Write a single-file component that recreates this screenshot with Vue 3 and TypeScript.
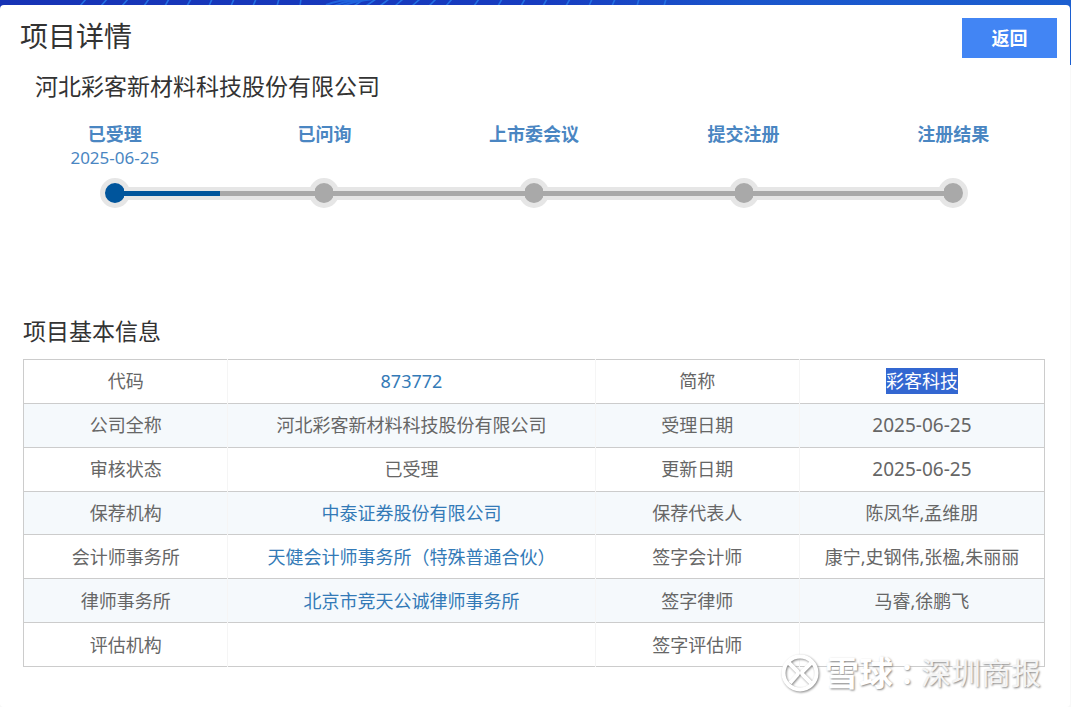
<script setup lang="ts">
interface Stage {
  name: string
  date?: string
}

interface Field {
  text: string
  kind?: 'link' | 'code' | 'date' | 'marked'
}

interface Row {
  leftLabel: string
  left: Field
  rightLabel: string
  right: Field
}

const company = '河北彩客新材料科技股份有限公司'

const stages: Stage[] = [
  { name: '已受理', date: '2025-06-25' },
  { name: '已问询' },
  { name: '上市委会议' },
  { name: '提交注册' },
  { name: '注册结果' },
]

const rows: Row[] = [
  { leftLabel: '代码', left: { text: '873772', kind: 'code' }, rightLabel: '简称', right: { text: '彩客科技', kind: 'marked' } },
  { leftLabel: '公司全称', left: { text: company }, rightLabel: '受理日期', right: { text: '2025-06-25', kind: 'date' } },
  { leftLabel: '审核状态', left: { text: '已受理' }, rightLabel: '更新日期', right: { text: '2025-06-25', kind: 'date' } },
  { leftLabel: '保荐机构', left: { text: '中泰证券股份有限公司', kind: 'link' }, rightLabel: '保荐代表人', right: { text: '陈凤华,孟维朋' } },
  { leftLabel: '会计师事务所', left: { text: '天健会计师事务所（特殊普通合伙）', kind: 'link' }, rightLabel: '签字会计师', right: { text: '康宁,史钢伟,张楹,朱丽丽' } },
  { leftLabel: '律师事务所', left: { text: '北京市竞天公诚律师事务所', kind: 'link' }, rightLabel: '签字律师', right: { text: '马睿,徐鹏飞' } },
  { leftLabel: '评估机构', left: { text: '' }, rightLabel: '签字评估师', right: { text: '' } },
]
</script>

<template>
  <div class="page">
    <svg class="banner" viewBox="0 0 1071 65" preserveAspectRatio="none" aria-hidden="true">
      <defs>
        <linearGradient id="banner-fill">
          <stop offset="0" stop-color="#1733b5" />
          <stop offset="0.5" stop-color="#173cc0" />
          <stop offset="0.7" stop-color="#1a55cb" />
          <stop offset="1" stop-color="#1c5fd0" />
        </linearGradient>
      </defs>
      <rect width="1071" height="65" fill="url(#banner-fill)" />
      <path
        d="M80 6l6-7M101 6l6-7M122 6l6-7M144 6l5-7M165 6l4-7M187 6l4-7M209 6l3-7M231 6l3-7M253 6l3-7M277 6l2-7M300 6l1-7M354 6l10-7M366 6l10-7M380 6l9-7M395 6l8-7M412 6l8-7M429 6l7-7M446 6l6-7M474 6l5-7M498 6l4-7M521 6l4-7M543 6l4-7M566 6l4-7M589 6l3-7M612 6l3-7M637 6l2-7M664 6l2-7"
        stroke="#2470e2"
        stroke-width="1.6"
        fill="none"
      />
      <path d="M326 5q12-5 30-6M334 6q14-6 32-7M342 6q12-5 32-7" stroke="#1f62dc" stroke-width="2" fill="none" />
    </svg>

    <main class="card">
      <header class="head">
        <h1>项目详情</h1>
        <button type="button" class="back">返回</button>
      </header>
      <h2 class="company">{{ company }}</h2>

      <ol class="stages">
        <li v-for="(stage, i) in stages" :key="stage.name" :class="{ done: i === 0 }">
          <strong>{{ stage.name }}</strong>
          <time>{{ stage.date }}</time>
          <div class="track">
            <span class="segment" :class="{ blank: i === 0 }"></span>
            <span class="dot"></span>
            <span class="segment" :class="{ blank: i === stages.length - 1 }"></span>
          </div>
        </li>
      </ol>

      <section class="info">
        <h2 id="info-title">项目基本信息</h2>
        <table aria-labelledby="info-title">
          <tbody>
            <tr v-for="row in rows" :key="row.leftLabel">
              <th scope="row">{{ row.leftLabel }}</th>
              <td class="wide">
                <a v-if="row.left.kind" href="#" :class="row.left.kind">{{ row.left.text }}</a>
                <template v-else>{{ row.left.text }}</template>
              </td>
              <th scope="row">{{ row.rightLabel }}</th>
              <td>
                <span :class="row.right.kind">{{ row.right.text }}</span>
              </td>
            </tr>
          </tbody>
        </table>
      </section>
    </main>

    <div class="watermark">
      <svg viewBox="0 0 38 38" aria-hidden="true">
        <circle cx="19" cy="19" r="16.5" />
        <path d="M8 9l8 8q2 2 0 4l-7 8M30 9l-8 8q-2 2 0 4l8 8" />
      </svg>
      <span class="brand">雪球</span>
      <span class="colon" lang="zh-TW">：</span>
      <span class="author">深圳商报</span>
    </div>
  </div>
</template>

<style>
body {
  margin: 0;
  background: #f8f8f8;
}
</style>

<style scoped>
.page {
  position: relative;
  box-sizing: border-box;
  min-height: 100vh;
  padding: 5px 1px 0 0;
  display: flex;
  font-family: 'Noto Sans', 'Noto Sans CJK SC', sans-serif;
  color: #333;
}

.banner {
  position: absolute;
  top: 0;
  left: 0;
  width: 100%;
  height: 65px;
}

.card {
  position: relative;
  flex: 1;
  min-width: 0;
  background: #fff;
  border-radius: 4px;
}

h1,
h2 {
  margin: 0;
  font-weight: 400;
}

.head {
  display: flex;
  justify-content: space-between;
  align-items: flex-start;
  padding: 13px 13px 0 20px;
}

h1 {
  font-size: 28px;
  line-height: 36px;
}

.back {
  width: 95px;
  height: 40px;
  padding: 0;
  border: 0;
  background: #4285f4;
  color: #fff;
  font: inherit;
  font-size: 18px;
  font-weight: 700;
  line-height: 40px;
}

.company {
  padding: 11px 35px 0;
  font-size: 23px;
  line-height: 34px;
}

.stages {
  display: flex;
  margin: 0;
  padding: 19px 12px 0 10px;
  list-style: none;
  text-align: center;
  color: #4a86c2;
}

.stages li {
  flex: 1;
  min-width: 0;
}

.stages strong,
.stages time {
  display: block;
  height: 24px;
  line-height: 24px;
}

.stages strong {
  font-size: 18px;
}

.stages time {
  font-size: 17px;
}

.track {
  display: flex;
  align-items: center;
  margin-top: 8px;
}

.segment {
  z-index: 1;
  flex: 1;
  height: 5px;
  border: solid #e6e6e6;
  border-width: 4px 0;
  background: #a9a9a9;
}

.segment:first-child {
  margin-right: -6px;
}

.segment:last-child {
  margin-left: -6px;
}

.blank {
  visibility: hidden;
}

.dot {
  width: 20px;
  height: 20px;
  border: 5px solid #e6e6e6;
  border-radius: 50%;
  background: #a9a9a9;
}

.done .dot,
.done .segment {
  background-color: #00559c;
}

.info {
  padding: 106px 25px 0 23px;
}

.info h2 {
  font-size: 23px;
  line-height: 34px;
}

table {
  width: 100%;
  height: 308px;
  margin-top: 11px;
  border-collapse: collapse;
  table-layout: fixed;
  border: 1px solid #ccc;
  font-size: 18px;
  line-height: 26px;
  color: #666;
  text-align: center;
}

tr {
  border-bottom: 1px solid #ccc;
}

tr:nth-child(even) {
  background: #f5f9fc;
}

th,
td {
  padding: 8px 0;
  font-weight: 400;
}

th {
  width: 20%;
}

td {
  width: 24%;
}

.wide {
  width: 36%;
}

th:not(:last-child),
td:not(:last-child) {
  border-right: 1px solid #f5f5f5;
}

a {
  color: #337ab7;
  text-decoration: none;
}

.date {
  font-size: 19px;
}

.marked {
  display: inline-block;
  background: #3367d1;
  color: #fff;
}

.watermark {
  position: absolute;
  right: 30px;
  bottom: 14px;
  display: flex;
  align-items: center;
  font-size: 30px;
  line-height: 40px;
  color: #fff;
  text-shadow: 1px 1px 2px #888;
}

.watermark svg {
  width: 38px;
  height: 38px;
  margin-right: 6px;
  fill: none;
  stroke: #fff;
  stroke-width: 4;
  filter: drop-shadow(1px 1px 1px #888);
}

.brand {
  font-size: 34px;
  font-weight: 700;
}

.colon {
  font-family: 'Noto Sans CJK TC', sans-serif;
  font-size: 28px;
  font-weight: 700;
}

.author {
  color: #f4f4f4;
}
</style>
